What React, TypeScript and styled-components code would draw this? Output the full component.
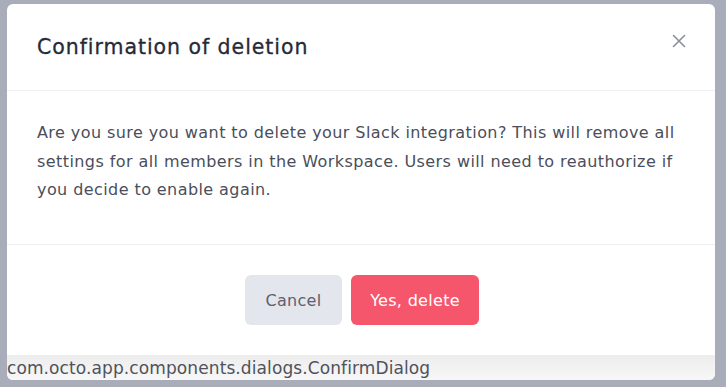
import React from 'react';
import styled, {createGlobalStyle} from "styled-components";

const Global = createGlobalStyle`
  html, body {
    margin: 0;
    padding: 0;
    background: #a9adb9;
  }
  body {
    font-family: "DejaVu Sans", "Noto Sans", sans-serif;
  }
`;

const Page = styled.div`
  width: 726px;
  height: 387px;
  box-sizing: border-box;
  padding: 4px 11px 7px 7px;
  background: #a9adb9;
`;

const Window = styled.div`
  height: 100%;
  background: #fff;
  border-radius: 6px;
  overflow: hidden;
  display: grid;
  grid-template-columns: 100%;
  grid-template-rows: 86px 1px 153px 1px 1fr 25px;
`;

const Header = styled.div`
  display: flex;
  align-items: center;
  justify-content: space-between;
  padding: 0 29px 0 30px;
`;

const Title = styled.h2`
  margin: 0;
  font-size: 20.5px;
  font-weight: 400;
  letter-spacing: 0.95px;
  color: #262a37;
  -webkit-text-stroke: 0.3px #262a37;
`;

const Close = styled.button`
  border: 0;
  background: none;
  padding: 0;
  width: 14px;
  height: 14px;
  display: flex;
  margin-top: -12px;
  cursor: pointer;
`;

const Divider = styled.div`
  background: #eeeff2;
`;

const Body = styled.div`
  padding: 28px 0 0 30px;
  font-size: 16px;
  letter-spacing: 0.42px;
  line-height: 28.5px;
  color: #4a4e5b;
`;

const Text = styled.p`
  margin: 0;
  max-width: 652px;
`;

const Footer = styled.div`
  display: flex;
  justify-content: center;
  align-items: flex-start;
  gap: 9px;
  padding-top: 30px;
  padding-left: 2px;
`;

const Button = styled.button<{danger?: boolean}>`
  height: 50px;
  min-width: ${p => p.danger ? '128px' : '97px'};
  border: 0;
  border-radius: 6px;
  padding: 0 16px;
  font-family: inherit;
  font-size: 16px;
  letter-spacing: 0.3px;
  font-weight: 400;
  background: ${p => p.danger ? '#f5566b' : '#e4e6ee'};
  color: ${p => p.danger ? '#ffffff' : '#5d606d'};
  cursor: pointer;
`;

const DebugBar = styled.div`
  background: linear-gradient(#ededed, #f7f7f7);
  font-size: 17px;
  letter-spacing: 0.1px;
  line-height: 27px;
  color: #4f525c;
  white-space: nowrap;
`;

export default function App() {
    return <Page>
        <Global/>
        <Window>
            <Header>
                <Title>Confirmation of deletion</Title>
                <Close aria-label="Close">
                    <svg width="14" height="14" viewBox="0 0 14 14">
                        <path d="M1.5 1.5 L12.5 12.5 M12.5 1.5 L1.5 12.5" stroke="#8b8f9b" strokeWidth="1.6"
                              strokeLinecap="round"/>
                    </svg>
                </Close>
            </Header>
            <Divider/>
            <Body>
                <Text>
                    Are you sure you want to delete your Slack integration? This will remove all settings for all
                    members in the Workspace. Users will need to reauthorize if you decide to enable again.
                </Text>
            </Body>
            <Divider/>
            <Footer>
                <Button>Cancel</Button>
                <Button danger>Yes, delete</Button>
            </Footer>
            <DebugBar>com.octo.app.components.dialogs.ConfirmDialog</DebugBar>
        </Window>
    </Page>;
}
